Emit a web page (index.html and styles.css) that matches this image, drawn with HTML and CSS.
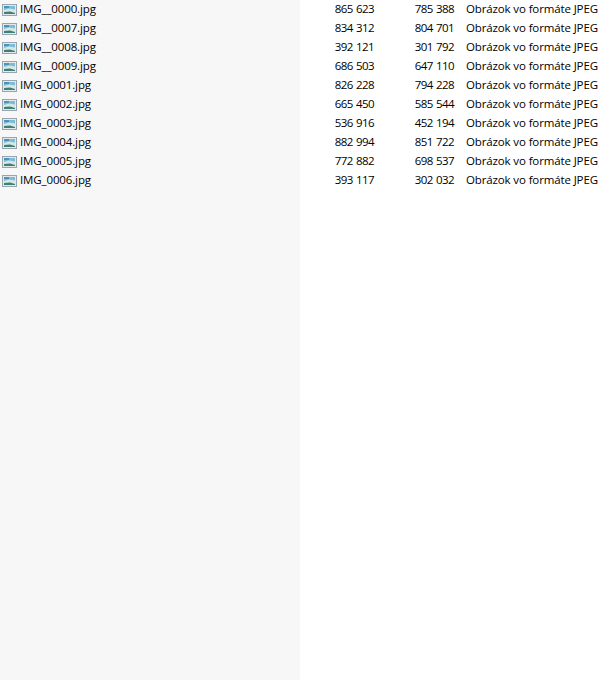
FILE: index.html
```html
<!DOCTYPE html>
<html lang="sk">

<head>
  <meta charset="UTF-8" />
  <title>Obrázky</title>
  <link rel="stylesheet" href="styles.css">
</head>

<body>
  <svg class="defs" width="0" height="0">
    <symbol id="ico" viewBox="0 0 15 12">
      <rect x="0.5" y="0.5" width="14" height="11" fill="#e4e9ed" stroke="#98a4ae" />
      <rect x="2" y="2" width="11" height="8" fill="#7dbcd8" />
      <rect x="2" y="2" width="5" height="2" fill="#4c93bb" />
      <path d="M2 6 L7 4.5 L13 5.5 V10 H2 Z" fill="#d6e8e0" />
      <path d="M2 8 L8 7.5 L13 9 V10 H2 Z" fill="#3f7f78" />
    </symbol>
  </svg>

  <div class="list">
    <div class="row">
      <div class="name"><svg class="ico"><use href="#ico" /></svg>IMG__0000.jpg</div>
      <div class="size">865 623</div>
      <div class="size">785 388</div>
      <div class="type">Obrázok vo formáte JPEG</div>
    </div>
    <div class="row">
      <div class="name"><svg class="ico"><use href="#ico" /></svg>IMG__0007.jpg</div>
      <div class="size">834 312</div>
      <div class="size">804 701</div>
      <div class="type">Obrázok vo formáte JPEG</div>
    </div>
    <div class="row">
      <div class="name"><svg class="ico"><use href="#ico" /></svg>IMG__0008.jpg</div>
      <div class="size">392 121</div>
      <div class="size">301 792</div>
      <div class="type">Obrázok vo formáte JPEG</div>
    </div>
    <div class="row">
      <div class="name"><svg class="ico"><use href="#ico" /></svg>IMG__0009.jpg</div>
      <div class="size">686 503</div>
      <div class="size">647 110</div>
      <div class="type">Obrázok vo formáte JPEG</div>
    </div>
    <div class="row">
      <div class="name"><svg class="ico"><use href="#ico" /></svg>IMG_0001.jpg</div>
      <div class="size">826 228</div>
      <div class="size">794 228</div>
      <div class="type">Obrázok vo formáte JPEG</div>
    </div>
    <div class="row">
      <div class="name"><svg class="ico"><use href="#ico" /></svg>IMG_0002.jpg</div>
      <div class="size">665 450</div>
      <div class="size">585 544</div>
      <div class="type">Obrázok vo formáte JPEG</div>
    </div>
    <div class="row">
      <div class="name"><svg class="ico"><use href="#ico" /></svg>IMG_0003.jpg</div>
      <div class="size">536 916</div>
      <div class="size">452 194</div>
      <div class="type">Obrázok vo formáte JPEG</div>
    </div>
    <div class="row">
      <div class="name"><svg class="ico"><use href="#ico" /></svg>IMG_0004.jpg</div>
      <div class="size">882 994</div>
      <div class="size">851 722</div>
      <div class="type">Obrázok vo formáte JPEG</div>
    </div>
    <div class="row">
      <div class="name"><svg class="ico"><use href="#ico" /></svg>IMG_0005.jpg</div>
      <div class="size">772 882</div>
      <div class="size">698 537</div>
      <div class="type">Obrázok vo formáte JPEG</div>
    </div>
    <div class="row">
      <div class="name"><svg class="ico"><use href="#ico" /></svg>IMG_0006.jpg</div>
      <div class="size">393 117</div>
      <div class="size">302 032</div>
      <div class="type">Obrázok vo formáte JPEG</div>
    </div>
  </div>
</body>

</html>
```

FILE: styles.css
```css
html,
body {
  height: 100%;
}

body {
  margin: 0;
  overflow: hidden;
  font-family: "Open Sans", sans-serif;
  font-size: 11.5px;
  letter-spacing: -0.13px;
  color: #000;
  background: linear-gradient(to right, #f7f7f7 300px, #fff 300px);
}

.defs {
  display: block;
  height: 0;
}

.list {
  margin-top: -1px;
}

.row {
  display: grid;
  grid-template-columns: 300px 74px 80px 1fr;
  height: 19px;
  line-height: 19px;
  white-space: nowrap;
}

.name {
  display: flex;
  align-items: center;
  gap: 3px;
  padding-left: 2px;
}

.ico {
  width: 15px;
  height: 12px;
  margin-top: 2px;
  flex: none;
}

.size {
  text-align: right;
  letter-spacing: -0.6px;
  word-spacing: 1px;
}

.type {
  padding-left: 12px;
}
```
